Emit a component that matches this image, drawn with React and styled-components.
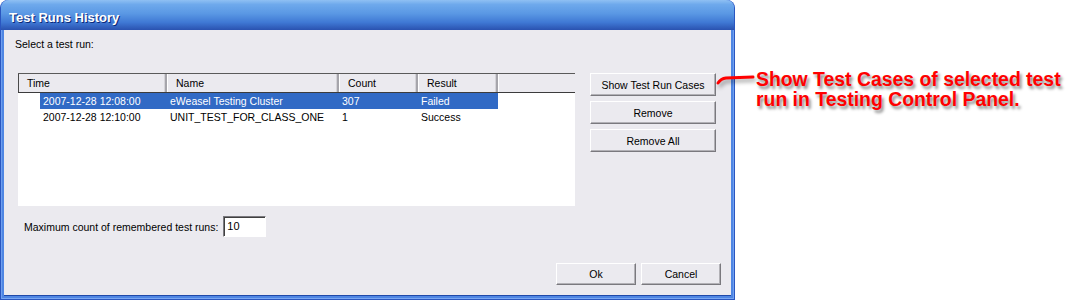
import React from "react";
import styled, { createGlobalStyle } from "styled-components";

const GlobalStyle = createGlobalStyle`
  body {
    margin: 0;
    background: #ffffff;
    font-family: "Liberation Sans", Arial, sans-serif;
  }
`;

const Stage = styled.div`
  display: flex;
  align-items: flex-start;
  width: 1085px;
  height: 300px;
  overflow: hidden;
`;

const Window = styled.div`
  width: 735px;
  height: 300px;
  box-sizing: border-box;
  display: flex;
  flex-direction: column;
  border-radius: 8px 8px 0 0;
  background: #4f86e3;
  border: 1px solid #2a56c0;
  border-top: none;
  padding: 0 3px 3px 3px;
  box-shadow: inset 1px 0 #6f9ff0, inset -1px 0 #6f9ff0, inset 0 -1px #79a7f2;
`;

const TitleBar = styled.div`
  height: 30px;
  box-sizing: border-box;
  margin: 0 -3px;
  padding: 4px 0 0 8px;
  display: flex;
  align-items: center;
  border-radius: 8px 8px 0 0;
  background: linear-gradient(
    to bottom,
    #8fc0f3 0%,
    #6ea9ec 15%,
    #5a98e4 45%,
    #3f78d4 75%,
    #2a52b0 100%
  );
  color: #ffffff;
  font-weight: bold;
  font-size: 13px;
  text-shadow: 1px 1px 0 #0c2a7a;
`;

const Body = styled.div`
  flex: 1;
  display: flex;
  flex-direction: column;
  background: #ebeaef;
  padding-left: 11px;
  border-bottom: 1px solid #1f48a8;
  font-size: 10.5px;
  color: #000000;
`;

const Label = styled.div`
  margin-top: 8px;
  height: 13px;
  line-height: 13px;
`;

const MainRow = styled.div`
  display: flex;
  margin-top: 22px;
`;

const ListBox = styled.div`
  margin-left: 3px;
  width: 557px;
  height: 133px;
  box-sizing: border-box;
  background: #ffffff;
  border-top: 1px solid #5a5a5a;
`;

const Header = styled.div`
  display: flex;
  height: 18px;
  border-bottom: 1px solid #3c3c3c;
  background: #ebeaef;
`;

const HeadCell = styled.div`
  width: ${(p) => (p.$w ? `${p.$w}px` : "auto")};
  flex: ${(p) => (p.$w ? "none" : "1")};
  box-sizing: border-box;
  padding: 1px 0 0 8px;
  line-height: 17px;
  border-left: 1px solid #ffffff;
  border-right: 2px solid #a6a5ab;
  box-shadow: inset -1px 0 #d4d3d8;
  &:first-child {
    border-left: 1px solid #4a4a4a;
  }
  &:last-child {
    border-right: none;
    box-shadow: none;
  }
`;

const Row = styled.div`
  display: flex;
  margin-left: 22px;
  width: 458px;
  height: 16px;
  line-height: 16px;
  background: ${(p) => (p.$selected ? "#316ac5" : "transparent")};
  color: ${(p) => (p.$selected ? "#ffffff" : "#000000")};
`;

const Cell = styled.div`
  width: ${(p) => p.$w}px;
  box-sizing: border-box;
  padding-left: 3px;
  white-space: nowrap;
  overflow: hidden;
`;

const ButtonColumn = styled.div`
  display: flex;
  flex-direction: column;
  gap: 5px;
  margin-left: 15px;
`;

const Button = styled.button`
  width: ${(p) => p.$w}px;
  height: ${(p) => p.$h}px;
  box-sizing: border-box;
  padding: 0;
  font-family: "Liberation Sans", Arial, sans-serif;
  font-size: 10.5px;
  color: #000000;
  background: #ebeaef;
  border: 1px solid;
  border-color: #ffffff #7a797e #7a797e #ffffff;
  box-shadow: inset -1px -1px #b2b1b6;
`;

const CountRow = styled.div`
  display: flex;
  align-items: center;
  margin-top: 10px;
  margin-left: 9px;
  gap: 5px;
`;

const CountInput = styled.div`
  width: 43px;
  height: 21px;
  box-sizing: border-box;
  background: #ffffff;
  border: 1px solid;
  border-color: #7a797e #ffffff #ffffff #7a797e;
  box-shadow: inset 1px 1px #404040;
  padding-left: 3px;
  line-height: 18px;
  font-size: 11px;
`;

const Footer = styled.div`
  display: flex;
  justify-content: flex-end;
  gap: 5px;
  margin-top: auto;
  padding: 0 10px 10px 0;
`;

const Annotation = styled.div`
  position: relative;
  margin-left: 21px;
  margin-top: 69px;
  font-family: "Liberation Sans", Arial, sans-serif;
  font-weight: bold;
  font-size: 19.4px;
  line-height: 20px;
  color: #ff0000;
  text-shadow: 2px 3px 3px rgba(0, 0, 0, 0.45);
  white-space: nowrap;
`;

const Connector = styled.svg`
  position: absolute;
  left: -40px;
  top: 3px;
  overflow: visible;
  filter: drop-shadow(2px 3px 2px rgba(0, 0, 0, 0.4));
`;

const columns = [127, 172, 79, 80];

const runs = [
  ["2007-12-28 12:08:00", "eWeasel Testing Cluster", "307", "Failed"],
  ["2007-12-28 12:10:00", "UNIT_TEST_FOR_CLASS_ONE", "1", "Success"],
];

export default function App() {
  return (
    <Stage>
      <GlobalStyle />
      <Window>
        <TitleBar>Test Runs History</TitleBar>
        <Body>
          <Label>Select a test run:</Label>
          <MainRow>
            <ListBox>
              <Header>
                <HeadCell $w={149}>Time</HeadCell>
                <HeadCell $w={172}>Name</HeadCell>
                <HeadCell $w={79}>Count</HeadCell>
                <HeadCell $w={80}>Result</HeadCell>
                <HeadCell />
              </Header>
              {runs.map((run, i) => (
                <Row key={run[0]} $selected={i === 0}>
                  {run.map((v, j) => (
                    <Cell key={j} $w={columns[j]}>
                      {v}
                    </Cell>
                  ))}
                </Row>
              ))}
            </ListBox>
            <ButtonColumn>
              <Button $w={126} $h={23}>Show Test Run Cases</Button>
              <Button $w={126} $h={23}>Remove</Button>
              <Button $w={126} $h={23}>Remove All</Button>
            </ButtonColumn>
          </MainRow>
          <CountRow>
            <span>Maximum count of remembered test runs:</span>
            <CountInput>10</CountInput>
          </CountRow>
          <Footer>
            <Button $w={80} $h={22}>Ok</Button>
            <Button $w={80} $h={22}>Cancel</Button>
          </Footer>
        </Body>
      </Window>
      <Annotation>
        <Connector width="40" height="16" viewBox="0 0 40 16">
          <path
            d="M2 11 C4 8 6 6.5 10 6 L37 5"
            fill="none"
            stroke="#ff0000"
            strokeWidth="3"
            strokeLinecap="round"
          />
        </Connector>
        Show Test Cases of selected test
        <br />
        run in Testing Control Panel.
      </Annotation>
    </Stage>
  );
}
